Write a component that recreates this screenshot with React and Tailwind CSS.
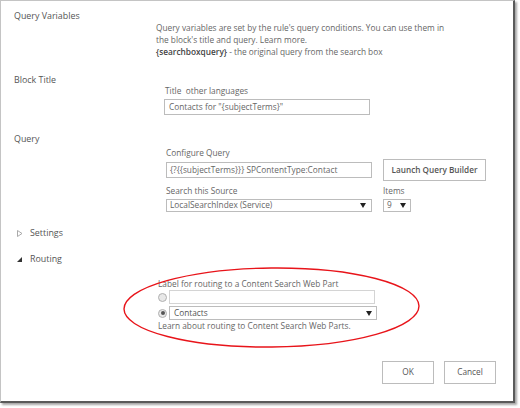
import React from "react";

const font = { fontFamily: '"Open Sans", "Noto Sans", sans-serif' };

function Arrow() {
  return (
    <svg width="6" height="5" viewBox="0 0 6 5" className="shrink-0">
      <path d="M0 0 L6 0 L3 5 Z" fill="#222" />
    </svg>
  );
}

function Radio({ checked }) {
  return (
    <span className="w-[9px] h-[9px] rounded-full border border-[#b0b0b0] bg-[#e8e8e8] flex items-center justify-center shrink-0">
      {checked && <span className="w-[4px] h-[4px] rounded-full bg-[#555]" />}
    </span>
  );
}

function SectionLabel({ children, className = "" }) {
  return <div className={`text-[8.9px] leading-[12px] text-[#555] ${className}`}>{children}</div>;
}

export default function App() {
  return (
    <div className="w-[520px] h-[408px] bg-white relative" style={font}>
      <div className="w-[515px] h-[403px] border-t border-l border-[#c4c4c4] border-r-2 border-b-2 border-r-[#5a5a5a] border-b-[#5a5a5a] shadow-[2px_2px_2px_rgba(0,0,0,0.35)] bg-white flex flex-col pl-[13px] pt-[9px]">
        {/* Query Variables */}
        <SectionLabel>Query Variables</SectionLabel>
        <div className="ml-[142px] text-[8.3px] leading-[12px] text-[#666] w-[300px]">
          <div>Query variables are set by the rule's query conditions. You can use them in</div>
          <div>the block's title and query. Learn more.</div>
          <div>
            <span className="font-semibold text-[#444]">{"{searchboxquery}"}</span> - the original query from the search box
          </div>
        </div>

        {/* Block Title */}
        <SectionLabel className="mt-[16px]">Block Title</SectionLabel>
        <div className="ml-[150px] mt-[-1px]">
          <div className="text-[8.3px] leading-[12px] text-[#666] pl-[1px]">
            Title&nbsp;&nbsp;other languages
          </div>
          <div className="mt-[2px] w-[206px] h-[16px] border border-[#bcbcbc] text-[8.3px] text-[#666] px-[4px] flex items-center">
            Contacts for "{"{subjectTerms}"}"
          </div>
        </div>

        {/* Query */}
        <SectionLabel className="mt-[18px]">Query</SectionLabel>
        <div className="ml-[152px] mt-[2px]">
          <div className="text-[8.3px] leading-[12px] text-[#666]">Configure Query</div>
          <div className="flex items-center gap-[11px]">
            <div className="w-[206px] h-[16px] border border-[#bcbcbc] text-[8.3px] text-[#666] px-[3px] flex items-center">
              {"{?{{subjectTerms}}} SPContentType:Contact"}
            </div>
            <div className="w-[103px] h-[22px] border border-[#bcbcbc] text-[8.2px] font-semibold text-[#555] flex items-center justify-center">
              Launch Query Builder
            </div>
          </div>
          <div className="flex gap-[11px] mt-[4px] text-[8.3px] leading-[12px] text-[#666]">
            <div className="w-[206px]">Search this Source</div>
            <div>Items</div>
          </div>
          <div className="flex gap-[11px] mt-[2px]">
            <div className="w-[206px] h-[13px] border border-[#bcbcbc] text-[8.3px] text-[#666] pl-[3px] pr-[5px] flex items-center justify-between">
              <span>LocalSearchIndex (Service)</span>
              <Arrow />
            </div>
            <div className="w-[28px] h-[13px] border border-[#bcbcbc] text-[8.3px] text-[#666] pl-[3px] pr-[4px] flex items-center justify-between">
              <span>9</span>
              <Arrow />
            </div>
          </div>
        </div>

        {/* Settings / Routing */}
        <div className="flex items-center mt-[15px] h-[12px]">
          <svg width="6" height="7" viewBox="0 0 6 7" className="ml-[3px]">
            <path d="M0.5 0.5 L5 3.5 L0.5 6.5 Z" fill="none" stroke="#a0a0a0" strokeWidth="0.9" />
          </svg>
          <span className="ml-[7px] text-[8.9px] text-[#555]">Settings</span>
        </div>
        <div className="flex items-center mt-[14px] h-[12px]">
          <svg width="5" height="5" viewBox="0 0 5 5" className="ml-[3px]">
            <path d="M5 0 L5 5 L0 5 Z" fill="#333" />
          </svg>
          <span className="ml-[8px] text-[8.9px] text-[#555]">Routing</span>
        </div>

        <div className="ml-[144px] mt-[13px]">
          <div className="text-[8.3px] leading-[12px] text-[#666]">Label for routing to a Content Search Web Part</div>
          <div className="flex items-center gap-[2px]">
            <Radio />
            <div className="w-[206px] h-[14px] border border-[#d4d4d4]" />
          </div>
          <div className="flex items-center gap-[2px] mt-[2px]">
            <Radio checked />
            <div className="w-[208px] h-[14px] border border-[#bcbcbc] text-[8.3px] text-[#555] pl-[4px] pr-[4px] flex items-center justify-between">
              <span>Contacts</span>
              <Arrow />
            </div>
          </div>
          <div className="text-[8.3px] leading-[12px] text-[#666]">Learn about routing to Content Search Web Parts.</div>
        </div>

        {/* Buttons */}
        <div className="flex justify-end gap-[10px] mt-[29px] pr-[17px]">
          <div className="w-[52px] h-[23px] border border-[#bcbcbc] text-[8.3px] text-[#555] flex items-center justify-center">OK</div>
          <div className="w-[52px] h-[23px] border border-[#bcbcbc] text-[8.3px] text-[#555] flex items-center justify-center">Cancel</div>
        </div>
      </div>

      {/* annotation ellipse */}
      <svg className="absolute left-0 top-0 pointer-events-none" width="520" height="408">
        <ellipse cx="271.5" cy="307.5" rx="147.5" ry="39.5" fill="none" stroke="#e8141a" strokeWidth="1.4" transform="rotate(-0.6 271.5 307.5)" />
      </svg>
    </div>
  );
}
